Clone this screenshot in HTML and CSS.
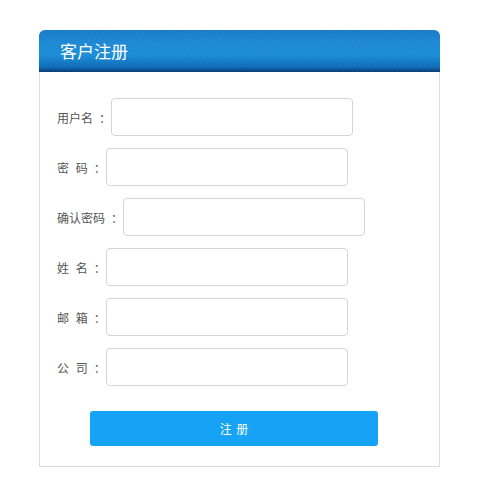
FILE: index.html
```html
<!DOCTYPE html>
<html lang="zh-CN">
<head>
<meta charset="utf-8">
<title>客户注册</title>
<link rel="stylesheet" href="styles.css">
</head>
<body>
<div class="panel">
  <div class="panel-head">客户注册</div>
  <form class="panel-body">
    <div class="row"><label class="lbl">用户名<span class="colon">：</span></label><input class="field" type="text"></div>
    <div class="row"><label class="lbl spaced">密 码<span class="colon">：</span></label><input class="field" type="password"></div>
    <div class="row"><label class="lbl">确认密码<span class="colon">：</span></label><input class="field" type="password"></div>
    <div class="row"><label class="lbl spaced">姓 名<span class="colon">：</span></label><input class="field" type="text"></div>
    <div class="row"><label class="lbl spaced">邮 箱<span class="colon">：</span></label><input class="field" type="text"></div>
    <div class="row"><label class="lbl spaced">公 司<span class="colon">：</span></label><input class="field" type="text"></div>
    <div class="actions"><button class="submit" type="button">注 册</button></div>
  </form>
</div>
</body>
</html>
```
FILE: styles.css
```css
html, body {
  margin: 0;
  padding: 0;
  background: #fff;
  font-family: "Noto Sans CJK SC", "Noto Sans", sans-serif;
}
.panel {
  box-sizing: border-box;
  width: 401px;
  margin: 30px 0 0 39px;
  border: 1px solid #dcdcdc;
  border-top: none;
  border-radius: 6px 6px 0 0;
}
.panel-head {
  box-sizing: border-box;
  height: 42px;
  margin: 0 -1px;
  padding-left: 21px;
  border-radius: 6px 6px 0 0;
  background:
    repeating-linear-gradient(37deg, rgba(255,255,255,0.035) 0 1px, rgba(0,0,0,0) 1px 3px),
    repeating-linear-gradient(-61deg, rgba(0,0,0,0.035) 0 1px, rgba(0,0,0,0) 1px 2px),
    linear-gradient(to bottom, #1a7ccb 0%, #1d8bd8 30%, #1c8fdb 60%, #0f6dbb 88%, #0a4f94 95%, #083c74 100%);
  color: #fff;
  font-size: 17px;
  line-height: 41px;
}
.panel-body {
  margin: 0;
  padding: 26px 0 20px 17px;
  display: flex;
  flex-direction: column;
  gap: 12px;
}
.row {
  display: flex;
  align-items: center;
  height: 38px;
}
.lbl {
  font-size: 12px;
  color: #555;
  white-space: pre;
}
.lbl.spaced {
  word-spacing: 4px;
}
.colon {
  margin-left: 6px;
}
.field {
  box-sizing: border-box;
  width: 242px;
  height: 38px;
  border: 1px solid #d4d4d4;
  border-radius: 4px;
  background: #fff;
  outline: none;
}
.actions {
  padding: 13px 0 0 33px;
}
.submit {
  width: 288px;
  height: 35px;
  border: none;
  border-radius: 3px;
  background: #17a3f5;
  color: #fff;
  font-family: "Noto Sans CJK SC", sans-serif;
  font-size: 12px;
  word-spacing: 2px;
  cursor: pointer;
}
```
